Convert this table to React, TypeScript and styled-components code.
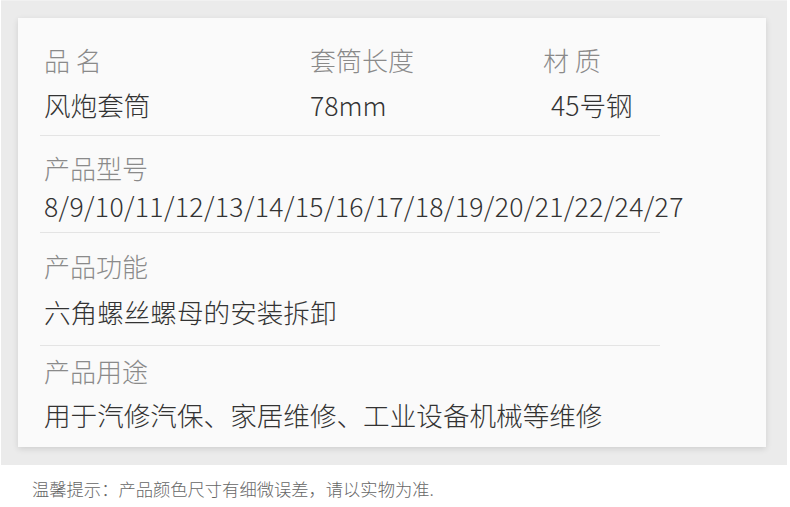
import React from "react";
import styled, { createGlobalStyle } from "styled-components";

const GlobalStyle = createGlobalStyle`
  body {
    margin: 0;
    background: #ffffff;
    font-family: "Noto Sans CJK SC", "Noto Sans", sans-serif;
  }
`;

const Panel = styled.div`
  margin-left: 1px;
  width: 786px;
  height: 465px;
  box-sizing: border-box;
  background: #ebebeb;
  border-top: 1px solid #f1f1f1;
  padding: 17px 21px 18px 17px;
`;

const Card = styled.div`
  height: 429px;
  box-sizing: border-box;
  background: #fafafa;
  box-shadow: 0 2px 6px rgba(0, 0, 0, 0.12);
  padding: 0 0 0 22px;
`;

const Section = styled.div<{ $top: number; $gap: number; $bottom: number; $last?: boolean }>`
  width: 620px;
  box-sizing: border-box;
  padding: ${(p) => p.$top}px 0 ${(p) => p.$bottom}px 4px;
  border-bottom: ${(p) => (p.$last ? "none" : "1px solid #e4e4e4")};
  display: flex;
  flex-direction: column;
  gap: ${(p) => p.$gap}px;
`;

const Columns = styled.div`
  display: grid;
  grid-template-columns: 266px 233px 1fr;
`;

const Column = styled.div<{ $gap: number }>`
  display: flex;
  flex-direction: column;
  gap: ${(p) => p.$gap}px;
`;

const Label = styled.div`
  font-size: 26px;
  font-weight: 300;
  line-height: 30px;
  color: #8a8a8a;
  white-space: nowrap;
`;

const Value = styled.div<{ $shift?: number; $spacing?: number }>`
  font-size: 26.6px;
  font-weight: 300;
  line-height: 30px;
  color: #333333;
  white-space: nowrap;
  padding-left: ${(p) => p.$shift ?? 0}px;
  letter-spacing: ${(p) => p.$spacing ?? 0}px;
`;

const Note = styled.div`
  margin-top: 12px;
  padding-left: 32px;
  font-size: 17.3px;
  font-weight: 300;
  line-height: 24px;
  color: #666666;
  white-space: nowrap;
`;

const specs = [
  { label: "品 名", value: "风炮套筒", shift: 0 },
  { label: "套筒长度", value: "78mm", shift: 0 },
  { label: "材 质", value: "45号钢", shift: 8 },
];

export default function App() {
  return (
    <>
      <GlobalStyle />
      <Panel>
        <Card>
          <Section $top={27} $gap={15} $bottom={15}>
            <Columns>
              {specs.map((s) => (
                <Column key={s.label} $gap={15}>
                  <Label>{s.label}</Label>
                  <Value $shift={s.shift}>{s.value}</Value>
                </Column>
              ))}
            </Columns>
          </Section>
          <Section $top={17} $gap={8} $bottom={11}>
            <Label>产品型号</Label>
            <Value $spacing={0.35}>8/9/10/11/12/13/14/15/16/17/18/19/20/21/22/24/27</Value>
          </Section>
          <Section $top={18} $gap={16} $bottom={18}>
            <Label>产品功能</Label>
            <Value>六角螺丝螺母的安装拆卸</Value>
          </Section>
          <Section $top={10} $gap={14} $bottom={16} $last>
            <Label>产品用途</Label>
            <Value>用于汽修汽保、家居维修、工业设备机械等维修</Value>
          </Section>
        </Card>
      </Panel>
      <Note>温馨提示：产品颜色尺寸有细微误差，请以实物为准.</Note>
    </>
  );
}
